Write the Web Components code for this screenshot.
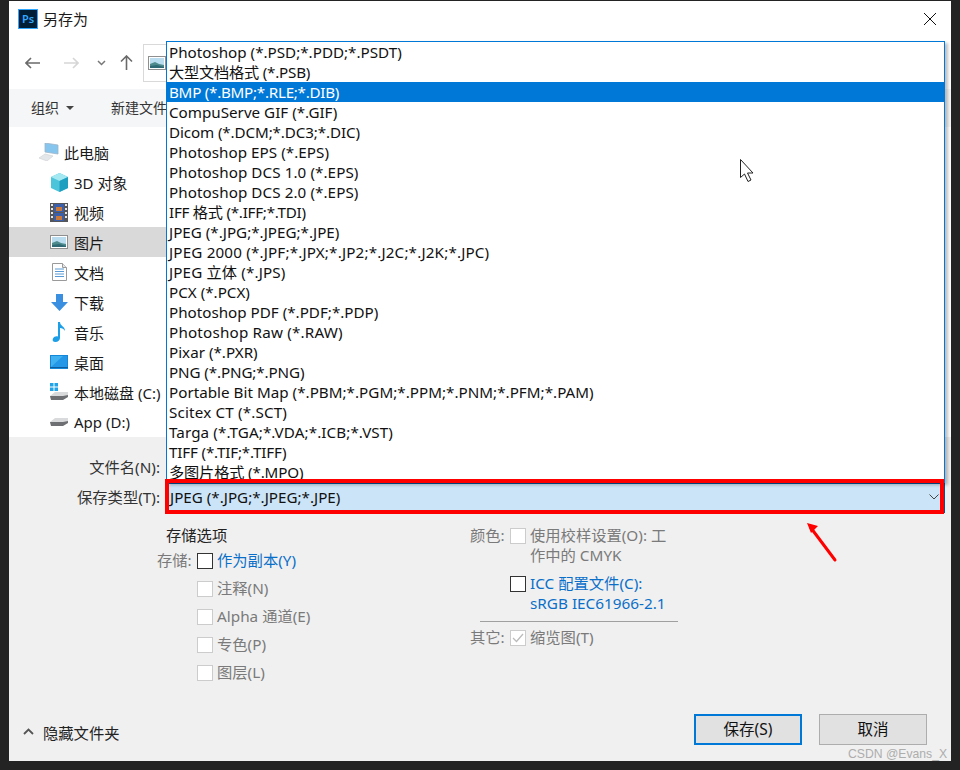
<!DOCTYPE html>
<html lang="zh">
<head>
<meta charset="utf-8">
<title>另存为</title>
<style>
  html, body { margin: 0; height: 770px; overflow: hidden; background: #232323; }
  body { font: 15px "Noto Sans", "Noto Sans CJK SC", sans-serif; color: #1a1a1a; }
</style>
</head>
<body>
<save-dialog></save-dialog>

<script>
const ICONS = {
  pc: `<svg width="22" height="18" viewBox="0 0 22 18"><path d="M7 0l13 2v9L7 9z" fill="#86c6ee" stroke="#9db4c6" stroke-width=".8"/><path d="M1 15l6-4 8 2-6 5z" fill="#e4e7e9" stroke="#d5d8da" stroke-width=".8"/></svg>`,
  cube: `<svg width="19" height="19" viewBox="0 0 19 19"><path d="M9.5 0L18 4v11l-8.500 4L1 15V4z" fill="#4cc4da"/><path d="M9.500 0L18 4l-8.500 4L1 4z" fill="#a4e8f2"/><path d="M9.500 8L18 4v11l-8.500 4z" fill="#1f9fc0"/></svg>`,
  film: `<svg width="18" height="19" viewBox="0 0 18 19"><rect width="18" height="19" fill="#55565a"/><rect x="4" y="1" width="10" height="8" fill="#3b5fa8"/><rect x="4" y="10" width="10" height="8" fill="#3b5fa8"/><path d="M6 4h6v4H6zM6 13h6v4H6z" fill="#c9783a"/><path d="M1 1h2v2H1zM1 5h2v2H1zM1 9h2v2H1zM1 13h2v2H1zM15 1h2v2h-2zM15 5h2v2h-2zM15 9h2v2h-2zM15 13h2v2h-2z" fill="#e8e8e8"/></svg>`,
  picture: `<svg width="18" height="14" viewBox="0 0 18 14"><rect x=".5" y=".5" width="17" height="13" fill="#fff" stroke="#8f8f8f"/><rect x="2" y="2" width="14" height="10" fill="#b9dcee"/><path d="M2 8l5-2 4 2 5 1v3H2z" fill="#4f8a8c"/><path d="M2 10l7-1 7 2v1H2z" fill="#2f6a74"/></svg>`,
  doc: `<svg width="15" height="18" viewBox="0 0 15 18"><path d="M.5.500h10l4 4v13H.5z" fill="#fff" stroke="#9a9a9a"/><path d="M3 6h9M3 8.500h9M3 11h9M3 13.500h9" stroke="#5b9bd5"/><path d="M10.500.500v4h4" fill="#e6e6e6" stroke="#9a9a9a"/></svg>`,
  down: `<svg width="17" height="17" viewBox="0 0 17 17"><path d="M5 0h7v8h5l-8.500 9L0 8h5z" fill="#3b8fe0"/></svg>`,
  music: `<svg width="14" height="20" viewBox="0 0 14 20"><path d="M6 0h2c0 4 5 4 5 9-1-2-3-3-5-3v10c0 2-2 4-4.500 4S0 18.500 1 16.500s3-2.500 5-2z" fill="#1d9fe8"/></svg>`,
  desktop: `<svg width="18" height="14" viewBox="0 0 18 14"><rect width="18" height="14" fill="#1387d8"/><rect x="1" y="1" width="16" height="11" fill="#3fb0f0"/><path d="M1 12L13 1h4v11z" fill="#2497e6"/><rect y="12" width="18" height="1" fill="#0d5d9e"/></svg>`,
  driveC: `<svg width="20" height="18" viewBox="0 0 20 18"><path d="M1 0h3.500v3.500H1zM5.500 0H9v3.500H5.500zM1 4.500h3.500V8H1zM5.500 4.500H9V8H5.500z" fill="#1fa3ea"/><path d="M1 13l5-4h13v3L14 16H2z" fill="#d9dadb"/><path d="M1 13h13l5-1v2l-5 3H2z" fill="#6d6f72"/></svg>`,
  driveD: `<svg width="20" height="9" viewBox="0 0 20 9"><path d="M1 4l5-4h13v3l-5 4H2z" fill="#d9dadb"/><path d="M1 4h13l5-1v2l-5 3H2z" fill="#6d6f72"/></svg>`
};

class TitleBar extends HTMLElement {
  constructor() {
    super();
    this.attachShadow({ mode: "open" }).innerHTML = `
      <style>
        :host { display: flex; align-items: center; height: 35px; padding-left: 9px; background: #fff; font-size: 15px; }
        .ps { width: 20px; height: 20px; box-sizing: border-box; border: 1px solid #31a8ff; background: #001e36; color: #31a8ff;
              font: 600 11px/18px "Noto Sans", sans-serif; text-align: center; margin-right: 5px; }
        .title { flex: 1; }
        svg { margin-right: 15px; }
      </style>
      <div class="ps">Ps</div>
      <div class="title"><slot></slot></div>
      <svg width="12" height="12" viewBox="0 0 12 12"><path d="M0 0l12 12M12 0L0 12" stroke="#111" stroke-width="1"/></svg>`;
  }
}

class NavBar extends HTMLElement {
  constructor() {
    super();
    this.attachShadow({ mode: "open" }).innerHTML = `
      <style>
        :host { display: flex; align-items: center; height: 53px; background: #fff; padding-left: 16px; }
        svg { display: block; flex: none; }
        .path { width: 40px; height: 38px; box-sizing: border-box; margin-left: 10px; border: 1px solid #d9d9d9; border-right: 0;
                display: flex; align-items: center; padding-left: 4px; }
      </style>
      <svg width="15" height="12" viewBox="0 0 15 12" style="margin-right:24px"><path d="M15 6H1M6 1L1 6l5 5" fill="none" stroke="#6a6a6a" stroke-width="1.600"/></svg>
      <svg width="15" height="12" viewBox="0 0 15 12" style="margin-right:18px"><path d="M0 6h14M9 1l5 5-5 5" fill="none" stroke="#d6d6d6" stroke-width="1.600"/></svg>
      <svg width="9" height="6" viewBox="0 0 9 6" style="margin-right:14px"><path d="M1 1l3.500 3.500L8 1" fill="none" stroke="#777" stroke-width="1.500"/></svg>
      <svg width="13" height="15" viewBox="0 0 13 15"><path d="M6.500 15V1M1 6.500l5.500-5.500 5.500 5.500" fill="none" stroke="#6a6a6a" stroke-width="1.600"/></svg>
      <div class="path">${ICONS.picture}</div>`;
  }
}

class ToolBar extends HTMLElement {
  constructor() {
    super();
    this.attachShadow({ mode: "open" }).innerHTML = `
      <style>
        :host { display: flex; align-items: center; height: 38px; box-sizing: border-box; padding: 0 0 2px 22px; background: #f5f6f7; font-size: 14px; color: #333; }
        i { width: 0; height: 0; border: 4px solid transparent; border-top: 4px solid #444; border-bottom: 0; margin: 2px 37px 0 7px; }
      </style>
      <span>组织</span><i></i><span>新建文件</span>`;
  }
}

class NavItem extends HTMLElement {
  static observedAttributes = ["icon", "selected", "indent"];
  constructor() {
    super();
    this.attachShadow({ mode: "open" }).innerHTML = `
      <style>
        :host { display: flex; align-items: center; height: 30px; font-size: 15px; color: #1a1a1a; white-space: nowrap; overflow: hidden; }
        :host([selected]) { background: #d9d9d9; }
        .icon { width: 24px; margin-right: 3px; display: flex; justify-content: center; align-items: center; }
        .icon svg { display: block; }
      </style>
      <div class="icon"></div><slot></slot>`;
  }
  attributeChangedCallback() {
    this.shadowRoot.querySelector(".icon").innerHTML = ICONS[this.getAttribute("icon")] || "";
    this.style.paddingLeft = (this.getAttribute("indent") || 38) + "px";
  }
}

class SideNav extends HTMLElement {
  constructor() {
    super();
    this.attachShadow({ mode: "open" }).innerHTML = `
      <style>
        :host { display: block; height: 310px; box-sizing: border-box; padding: 10px 784px 0 0; background: #fff; }
      </style>
      <slot></slot>`;
  }
}

// [text, letter-spacing in px], the spacing makes up for the font's other glyph widths
const FORMATS = [
  ["Photoshop (*.PSD;*.PDD;*.PSDT)", 0], ["大型文档格式 (*.PSB)", -0.2], ["BMP (*.BMP;*.RLE;*.DIB)", -0.26], ["CompuServe GIF (*.GIF)", 0],
  ["Dicom (*.DCM;*.DC3;*.DIC)", -0.12], ["Photoshop EPS (*.EPS)", 0.05], ["Photoshop DCS 1.0 (*.EPS)", 0.08], ["Photoshop DCS 2.0 (*.EPS)", 0.08],
  ["IFF 格式 (*.IFF;*.TDI)", -0.25], ["JPEG (*.JPG;*.JPEG;*.JPE)", 0], ["JPEG 2000 (*.JPF;*.JPX;*.JP2;*.J2C;*.J2K;*.JPC)", 0.17], ["JPEG 立体 (*.JPS)", 0.14],
  ["PCX (*.PCX)", 0], ["Photoshop PDF (*.PDF;*.PDP)", 0], ["Photoshop Raw (*.RAW)", 0.2], ["Pixar (*.PXR)", 0], ["PNG (*.PNG;*.PNG)", -0.12],
  ["Portable Bit Map (*.PBM;*.PGM;*.PPM;*.PNM;*.PFM;*.PAM)", 0.02], ["Scitex CT (*.SCT)", 0.17], ["Targa (*.TGA;*.VDA;*.ICB;*.VST)", 0.1],
  ["TIFF (*.TIF;*.TIFF)", -0.16], ["多图片格式 (*.MPO)", -0.14]
];

// the opened drop-down, lies over the dialog
class FormatList extends HTMLElement {
  constructor() {
    super();
    const rows = FORMATS.map(([f, s], i) => `<div class="${i === 2 ? "row on" : "row"}" style="letter-spacing:${s}px">${f}</div>`).join("");
    this.attachShadow({ mode: "open" }).innerHTML = `
      <style>
        :host { position: absolute; left: 157px; top: 40px; width: 779px; height: 442px; box-sizing: border-box; overflow: hidden;
                background: #fff; border: 1px solid #0078d7; border-bottom: 0; box-shadow: 3px 2px 3px rgba(0,0,0,.25);
                font-size: 15.2px; color: #111; z-index: 2; }
        .row { height: 20px; line-height: 20px; padding-left: 2px; white-space: nowrap; }
        .on { background: #0078d7; color: #fff; }
      </style>
      ${rows}`;
  }
}

class OptionCheck extends HTMLElement {
  constructor() {
    super();
    this.attachShadow({ mode: "open" }).innerHTML = `
      <style>
        :host { display: flex; align-items: flex-start; line-height: 20px; color: #7a7a7a; height: 28px; }
        :host([active]) { color: #0a6fc9; }
        .box { flex: none; width: 16px; height: 16px; box-sizing: border-box; border: 1px solid #ccc; background: #fff; margin: 3px 4px 0 0; }
        :host([active]) .box { border-color: #333; }
        svg { display: block; }
      </style>
      <div class="box"><svg width="14" height="14" viewBox="0 0 14 14" style="display:${this.hasAttribute("checked") ? "block" : "none"}"><path d="M2 7l3.500 3.500L12 3" fill="none" stroke="#bbb" stroke-width="1.300"/></svg></div>
      <div><slot></slot></div>`;
  }
}

class SavePanel extends HTMLElement {
  constructor() {
    super();
    this.attachShadow({ mode: "open" }).innerHTML = `
      <style>
        :host { display: block; position: relative; height: 324px; background: #f0f0f0; font-size: 15.3px; color: #333; }
        .file { display: grid; grid-template-columns: 151px 1fr; align-items: center; column-gap: 6px; padding-top: 16px; }
        .file > span { text-align: right; white-space: nowrap; height: 30px; line-height: 28px; }
        .combo { grid-column: 2; display: flex; align-items: center; justify-content: space-between; height: 30px; box-sizing: border-box;
                 width: 779px; border: 1px solid #005499; background: #cce4f7; padding: 0 5px 2px 3px; font-size: 15.200px; color: #111; }
        .options { display: flex; padding: 12px 0 0 148px; line-height: 20px; }
        .store { width: 313px; }
        .head { color: #222; padding: 0 0 5px 9px; height: 20px; }
        .row { display: flex; }
        .key { width: 40px; flex: none; color: #7a7a7a; white-space: nowrap; }
        .color { width: 208px; }
        .color hr { border: 0; border-top: 1px solid #a0a0a0; margin: 0 0 5px 10px; height: 0; }
        .foot { position: absolute; left: 0; right: 0; top: 277px; height: 31px; display: flex; align-items: center; }
        .hide { display: flex; align-items: center; padding: 4px 0 0 14px; color: #222; flex: 1; }
        .hide svg { margin-right: 9px; }
      </style>
      <div class="file">
        <span>文件名(N):</span><div></div>
        <span>保存类型(T):</span>
        <div class="combo">JPEG (*.JPG;*.JPEG;*.JPE)
          <svg width="10" height="6" viewBox="0 0 10 6"><path d="M.5.500L5 5 9.500.500" fill="none" stroke="#444"/></svg>
        </div>
      </div>
      <div class="options">
        <div class="store">
          <div class="head">存储选项</div>
          <div class="row"><div class="key">存储:</div><div>
            <option-check active>作为副本(Y)</option-check>
            <option-check>注释(N)</option-check>
            <option-check>Alpha 通道(E)</option-check>
            <option-check>专色(P)</option-check>
            <option-check>图层(L)</option-check>
          </div></div>
        </div>
        <div class="color">
          <div class="row"><div class="key">颜色:</div><option-check style="height:48px">使用校样设置(O): 工<br>作中的 CMYK</option-check></div>
          <div class="row"><div class="key"></div><option-check active style="height:48px">ICC 配置文件(C):<br>sRGB IEC61966-2.1</option-check></div>
          <hr>
          <div class="row"><div class="key">其它:</div><option-check checked>缩览图(T)</option-check></div>
        </div>
      </div>
      <div class="foot">
        <div class="hide"><svg width="11" height="7" viewBox="0 0 11 7"><path d="M1 6l4.500-4.500L10 6" fill="none" stroke="#555" stroke-width="1.800"/></svg>隐藏文件夹</div>
        <dialog-button primary>保存(S)</dialog-button>
        <dialog-button style="margin:0 24px 0 17px">取消</dialog-button>
      </div>`;
  }
}

class DialogButton extends HTMLElement {
  constructor() {
    super();
    this.attachShadow({ mode: "open" }).innerHTML = `
      <style>
        :host { display: flex; align-items: center; justify-content: center; width: 108px; height: 31px; box-sizing: border-box; padding-bottom: 2px;
                background: #e1e1e1; border: 1px solid #adadad; font-size: 15.500px; color: #111; }
        :host([primary]) { border: 2px solid #0078d7; }
      </style>
      <slot></slot>`;
  }
}

class SaveDialog extends HTMLElement {
  constructor() {
    super();
    this.attachShadow({ mode: "open" }).innerHTML = `
      <style>
        :host { display: block; position: relative; width: 942px; height: 760px; margin: 1px 0 0 9px; }
        .annot { position: absolute; left: 0; top: 0; z-index: 3; pointer-events: none; }
        .mark { position: absolute; left: 156px; top: 478px; width: 779px; height: 35px; box-sizing: border-box; border: 4px solid #f00; z-index: 3; }
        .wm { position: absolute; left: 839px; top: 745px; font: 12.200px/16px "Liberation Sans", sans-serif; color: #adadad; white-space: nowrap; z-index: 3; }
      </style>
      <title-bar>另存为</title-bar>
      <nav-bar></nav-bar>
      <tool-bar></tool-bar>
      <side-nav>
        <nav-item icon="pc" indent="28">此电脑</nav-item>
        <nav-item icon="cube">3D 对象</nav-item>
        <nav-item icon="film">视频</nav-item>
        <nav-item icon="picture" selected>图片</nav-item>
        <nav-item icon="doc">文档</nav-item>
        <nav-item icon="down">下载</nav-item>
        <nav-item icon="music">音乐</nav-item>
        <nav-item icon="desktop">桌面</nav-item>
        <nav-item icon="driveC">本地磁盘 (C:)</nav-item>
        <nav-item icon="driveD">App (D:)</nav-item>
      </side-nav>
      <save-panel></save-panel>
      <format-list></format-list>
      <div class="mark"></div>
      <svg class="annot" width="942" height="760" viewBox="0 0 942 760">
        <path d="M826 559L802 527" stroke="#f00" stroke-width="3" stroke-linecap="round"/>
        <path d="M798 522l11 3-7 7z" fill="#f00"/>
        <path d="M731.500 158.500v18l4-3.500 3.500 7.500 3-1.500-3.500-7h5.500z" fill="#fff" stroke="#222"/>
      </svg>
      <div class="wm">CSDN @Evans_X</div>`;
  }
}

customElements.define("title-bar", TitleBar);
customElements.define("nav-bar", NavBar);
customElements.define("tool-bar", ToolBar);
customElements.define("nav-item", NavItem);
customElements.define("side-nav", SideNav);
customElements.define("format-list", FormatList);
customElements.define("option-check", OptionCheck);
customElements.define("dialog-button", DialogButton);
customElements.define("save-panel", SavePanel);
customElements.define("save-dialog", SaveDialog);
</script>
</body>
</html>
